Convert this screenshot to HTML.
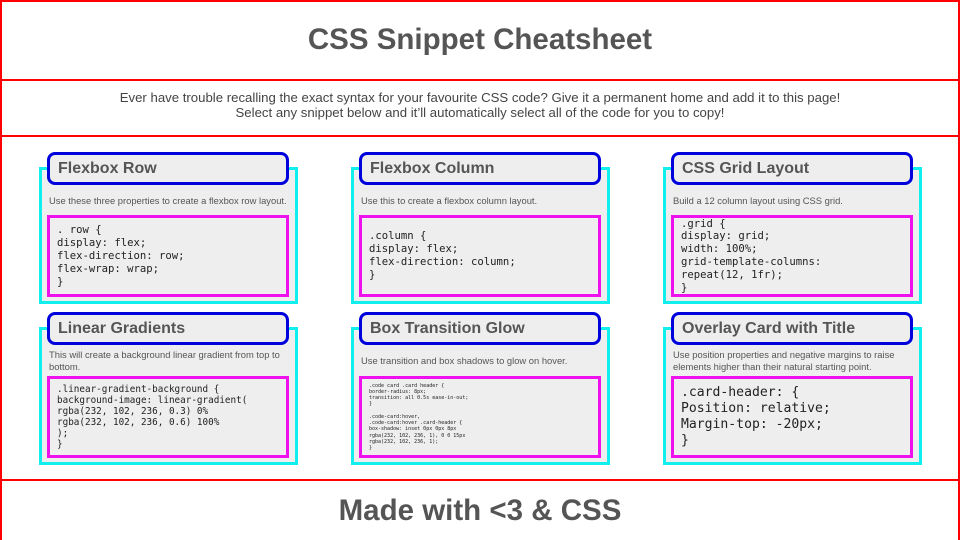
<!DOCTYPE html>
<html><head><meta charset="utf-8"><style>
*{margin:0;padding:0;box-sizing:border-box}
body{width:960px;height:540px;background:#fff;position:relative;overflow:hidden;font-family:"Liberation Sans",sans-serif}
.rl{position:absolute;background:#f00}
.h1{position:absolute;left:0;width:960px;text-align:center;font-weight:bold;color:#555;font-size:29.5px}
.intro{position:absolute;left:0;top:90px;width:960px;text-align:center;font-size:13.2px;line-height:15px;color:#444}
.card{position:absolute;width:260px;height:155px}
.cy{position:absolute;left:0;top:15px;width:259px;height:138px;border:3px solid #11eeee;background:#eee}
.hd{position:absolute;left:8px;top:0;width:242px;height:33px;border:3px solid #0000dd;border-radius:8px;background:#eee;font-weight:bold;font-size:16px;color:#555;padding-left:8px;line-height:27px}
.ds{position:absolute;left:10px;top:33px;width:242px;height:31px;display:flex;align-items:center;font-size:9.4px;line-height:12px;color:#555}
.cd{position:absolute;left:8px;top:63px;width:242px;height:82px;border:3px solid #ee11ee;background:#eee;display:flex;align-items:center;padding-left:7px;font-family:"DejaVu Sans Mono","Liberation Mono",monospace;font-size:10.6px;line-height:13px;color:#222;white-space:pre}
.r2 .cd{top:64px;line-height:11px;font-size:9.3px}
</style></head><body>
<div class="rl" style="left:0;top:0;width:960px;height:2px"></div>
<div class="rl" style="left:0;top:0;width:2px;height:540px"></div>
<div class="rl" style="left:958px;top:0;width:2px;height:540px"></div>
<div class="rl" style="left:0;top:79px;width:960px;height:2px"></div>
<div class="rl" style="left:0;top:135px;width:960px;height:2px"></div>
<div class="rl" style="left:0;top:479px;width:960px;height:2px"></div>
<div class="h1" style="top:23px">CSS Snippet Cheatsheet</div>
<div class="intro">Ever have trouble recalling the exact syntax for your favourite CSS code? Give it a permanent home and add it to this page!<br>Select any snippet below and it’ll automatically select all of the code for you to copy!</div>
<div class="h1" style="top:494px">Made with &lt;3 &amp; CSS</div>

<div class="card" style="left:39px;top:152px"><div class="cy" style="height:137px"></div><div class="hd">Flexbox Row</div><div class="ds">Use these three properties to create a flexbox row layout.</div><div class="cd">. row {
display: flex;
flex-direction: row;
flex-wrap: wrap;
}</div></div>

<div class="card" style="left:351px;top:152px"><div class="cy" style="height:137px"></div><div class="hd">Flexbox Column</div><div class="ds">Use this to create a flexbox column layout.</div><div class="cd">.column {
display: flex;
flex-direction: column;
}</div></div>

<div class="card" style="left:663px;top:152px"><div class="cy" style="height:137px"></div><div class="hd">CSS Grid Layout</div><div class="ds">Build a 12 column layout using CSS grid.</div><div class="cd" style="line-height:12.8px">.grid {
display: grid;
width: 100%;
grid-template-columns:
repeat(12, 1fr);
}</div></div>

<div class="card r2" style="left:39px;top:312px"><div class="cy"></div><div class="hd">Linear Gradients</div><div class="ds">This will create a background linear gradient from top to bottom.</div><div class="cd">.linear-gradient-background {
background-image: linear-gradient(
rgba(232, 102, 236, 0.3) 0%
rgba(232, 102, 236, 0.6) 100%
);
}</div></div>

<div class="card r2" style="left:351px;top:312px"><div class="cy"></div><div class="hd">Box Transition Glow</div><div class="ds">Use transition and box shadows to glow on hover.</div><div class="cd" style="font-size:5px;line-height:6.2px">.code card .card header {
border-radius: 8px;
transition: all 0.5s ease-in-out;
}

.code-card:hover,
.code-card:hover .card-header {
box-shadow: inset 0px 0px 8px
rgba(232, 102, 236, 1), 0 0 15px
rgba(232, 102, 236, 1);
}</div></div>

<div class="card r2" style="left:663px;top:312px"><div class="cy"></div><div class="hd">Overlay Card with Title</div><div class="ds">Use position properties and negative margins to raise elements higher than their natural starting point.</div><div class="cd" style="font-size:13.1px;line-height:16px">.card-header: {
Position: relative;
Margin-top: -20px;
}</div></div>
</body></html>
